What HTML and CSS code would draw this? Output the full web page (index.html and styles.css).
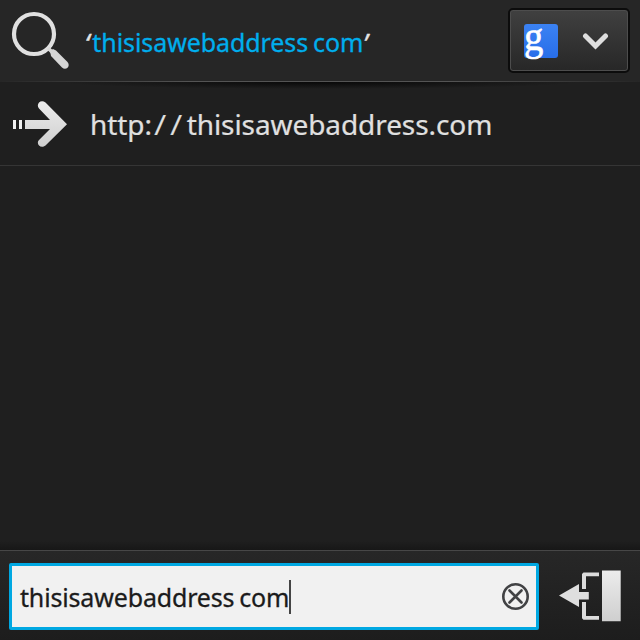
FILE: index.html
```
<!DOCTYPE html>
<html lang="en">
<head>
<meta charset="utf-8">
<title>Browser search</title>
<link rel="stylesheet" href="styles.css">
</head>
<body>
<main class="screen">
  <header class="search-row">
    <svg class="search-icon" width="60" height="60" viewBox="10 10 60 60">
      <defs><linearGradient id="metal" x1="0" y1="0" x2="0" y2="1"><stop offset="0" stop-color="#ececec"/><stop offset="1" stop-color="#cfcfcf"/></linearGradient></defs>
      <circle cx="34" cy="34" r="20" fill="none" stroke="#e0e0e0" stroke-width="4.200"/>
      <path d="M48 48L54 54" stroke="#d8d8d8" stroke-width="3.500"/>
      <path d="M50 51L53 49L56 50.500L67.500 62C71 66 66 71 62 67.500L51 56Z" fill="#d5d5d5"/>
    </svg>
    <div class="query"><span class="quote open">‘</span><span class="term">thisisawebaddress com</span><span class="quote">’</span></div>
    <button class="engine" aria-label="Search engine">
      <span class="engine-logo"><span class="engine-letter">g</span></span>
      <svg class="chevron" width="28" height="20" viewBox="582 31 28 20"><path d="M585.500 36L595.500 46L605.500 36" fill="none" stroke="#dedede" stroke-width="5" stroke-linecap="round"/></svg>
    </button>
  </header>
  <section class="url-row">
    <svg class="arrow-icon" width="60" height="50" viewBox="10 99 60 50">
      <path d="M13 120h3v9h-3zM19 120h3v9h-3z" fill="#f0f0f0"/>
      <path d="M25 120H50L39 108.500C35.500 104.500 40.500 98.500 45.500 102.500L67 124.300L45.500 145.500C40.500 149.500 35.500 143.500 39 140L50 129H25Z" fill="url(#metal)"/>
    </svg>
    <div class="url">http:<span class="slashes">//</span>thisisawebaddress.com</div>
  </section>
  <section class="results"></section>
  <footer class="bar">
    <div class="field">
      <span class="typed">thisisawebaddress com</span><span class="caret"></span>
      <svg class="clear" width="30" height="30" viewBox="500 582 30 30"><g fill="none" stroke="#414244" stroke-width="2.600"><circle cx="515.500" cy="596.500" r="12.200"/><path d="M509.500 590.500L521.500 602.500M521.500 590.500L509.500 602.500" stroke-linecap="round"/></g></svg>
    </div>
    <svg class="exit-icon" width="66" height="56" viewBox="557 568 66 56">
      <path d="M602 570.500H620.700V621.200H602Z" fill="url(#metal)"/>
      <path d="M582 589V574L583.500 572.500H599V576.200H586V589ZM582 602V618.200L583.500 619.700H599V616H586V602Z" fill="#dcdcdc"/>
      <path d="M559 595.500L579 584V592H588.800V599.500H579V607Z" fill="#dedede"/>
    </svg>
  </footer>
</main>
</body>
</html>
```
FILE: styles.css
```
* { box-sizing: border-box; }
body { margin: 0; background: #1f1f1f; font-family: "Noto Sans", sans-serif; }
.screen { width: 640px; height: 640px; display: flex; flex-direction: column; overflow: hidden; }
.search-row {
  height: 82px; display: flex; align-items: flex-start; padding: 8px 10px 0 10px;
  background: linear-gradient(90deg, #262626, #545454 30%, #545454 70%, #262626) bottom / 100% 1px no-repeat, #262626;
}
.search-icon { margin-top: 2px; flex: none; }
.query { flex: 1; margin: 16px 0 0 15px; font-size: 25px; line-height: 36px; white-space: nowrap; }
.quote { color: #e4e4e4; font-style: italic; -webkit-text-stroke: 0.500px #e4e4e4; }
.open { margin-right: 3px; }
.term { color: #00aeed; letter-spacing: -0.080px; word-spacing: -1.500px; -webkit-text-stroke: 0.300px #00aeed; }
.engine {
  width: 122px; height: 65px; padding: 0 18px 0 12px; display: flex; align-items: center; justify-content: space-between;
  border: 2px solid #0c0c0c; border-radius: 5px; background: linear-gradient(#404040, #272727);
  box-shadow: inset 0 0 0 1px #4d4d4d; flex: none;
}
.engine-logo { width: 34px; height: 34px; margin-left: 2px; border-radius: 3px; background: linear-gradient(#3b82f3, #286ee9); }
.engine-letter {
  display: block; width: 22px; margin-left: 0; color: #fff; font: 42px/24px "Liberation Serif", serif; text-align: left;
  transform: scaleX(0.920); transform-origin: left; -webkit-text-stroke: 0.600px #fff;
}
.url-row {
  height: 84px; flex: none; display: flex; align-items: flex-start; padding: 17px 10px 0; border-bottom: 1px solid #353535;
  background: radial-gradient(ellipse 260px 7px at 50% 0, #080808, transparent) no-repeat, #1f1f1f;
}
.url { margin: 6px 0 0 20px; color: #e0e0e0; font-size: 28px; line-height: 38px; letter-spacing: -0.080px; white-space: nowrap; -webkit-text-stroke: 0.200px #e0e0e0; }
.slashes { display: inline-block; margin-left: 3px; letter-spacing: 5.500px; transform: skewX(-4deg); }
.results { flex: 1; background: linear-gradient(transparent calc(100% - 9px), #171717), #1f1f1f; }
.bar {
  height: 90px; flex: none; padding: 12px 17px 0 9px; display: flex; justify-content: space-between; align-items: flex-start;
  border-top: 1px solid #474747; background: linear-gradient(#272727, #1d1d1d);
}
.field { width: 530px; height: 67px; display: flex; align-items: center; padding: 0 6px 0 8px; border: 3px solid #00a8e2; border-radius: 2px; background: #f1f1f1; }
.typed { color: #1b1b1b; font-size: 25px; line-height: 36px; letter-spacing: -0.160px; word-spacing: -1.500px; white-space: nowrap; -webkit-text-stroke: 0.300px #1b1b1b; }
.caret { width: 2px; height: 34px; background: #444; }
.clear { margin-left: auto; }
.exit-icon { margin-top: 5px; }
```
